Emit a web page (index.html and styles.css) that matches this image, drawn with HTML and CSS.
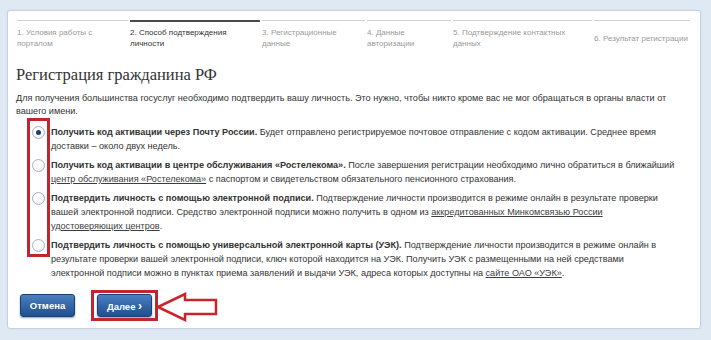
FILE: index.html
```html
<!DOCTYPE html>
<html lang="ru">

<head>
    <meta charset="UTF-8">
    <title>Регистрация гражданина РФ</title>
    <link rel="stylesheet" href="styles.css">
</head>

<body>
    <div class="panel">
        <div class="steps">
            <div class="step s1">1. Условия работы с<br>порталом</div>
            <div class="step s2 active">2. Способ подтверждения<br>личности</div>
            <div class="step s3">3. Регистрационные<br>данные</div>
            <div class="step s4">4. Данные<br>авторизации</div>
            <div class="step s5">5. Подтверждение контактных<br>данных</div>
            <div class="step s6">6. Результат регистрации</div>
        </div>

        <h2>Регистрация гражданина РФ</h2>
        <p class="intro">Для получения большинства госуслуг необходимо подтвердить вашу личность. Это нужно, чтобы никто кроме вас не мог обращаться в органы власти от<br>вашего имени.</p>

        <div class="options">
            <div class="option">
                <span class="radio checked"></span>
                <p><b>Получить код активации через Почту России.</b> Будет отправлено регистрируемое почтовое отправление с кодом активации. Среднее время<br>доставки – около двух недель.</p>
            </div>
            <div class="option">
                <span class="radio"></span>
                <p><b>Получить код активации в центре обслуживания «Ростелекома».</b> После завершения регистрации необходимо лично обратиться в ближайший<br><a href="#">центр обслуживания «Ростелекома»</a> с паспортом и свидетельством обязательного пенсионного страхования.</p>
            </div>
            <div class="option">
                <span class="radio"></span>
                <p><b>Подтвердить личность с помощью электронной подписи.</b> Подтверждение личности производится в режиме онлайн в результате проверки<br>вашей электронной подписи. Средство электронной подписи можно получить в одном из <a href="#">аккредитованных Минкомсвязью России</a><br><a href="#">удостоверяющих центров</a>.</p>
            </div>
            <div class="option">
                <span class="radio"></span>
                <p><b>Подтвердить личность с помощью универсальной электронной карты (УЭК).</b> Подтверждение личности производится в режиме онлайн в<br>результате проверки вашей электронной подписи, ключ которой находится на УЭК. Получить УЭК с размещенными на ней средствами<br>электронной подписи можно в пунктах приема заявлений и выдачи УЭК, адреса которых доступны на <a href="#">сайте ОАО «УЭК»</a>.</p>
            </div>
            <div class="mark radios-mark"></div>
        </div>

        <div class="actions">
            <button class="btn">Отмена</button>
            <div class="next-wrap">
                <button class="btn">Далее <span class="chev">›</span></button>
                <div class="mark next-mark"></div>
                <svg class="arrow" width="62" height="30" viewBox="0 0 62 30">
                    <polygon points="2,15 29,2 29,8 60,8 60,22 29,22 29,28" fill="#fff" stroke="#c9252c" stroke-width="2.5" stroke-linejoin="miter"/>
                </svg>
            </div>
        </div>
    </div>
</body>
</html>
```

FILE: styles.css
```css
body {
    margin: 0;
    padding: 10px 10px 9px 7px;
    background-color: #dfe9f3;
    font-family: "Liberation Sans", Arial, sans-serif;
    color: #333;
}

.panel {
    height: 319px;
    box-sizing: border-box;
    background-color: #fff;
    border: 1px solid #c6d3de;
    border-radius: 3px;
    box-shadow: 0 0 2px #cbd9e6;
    padding: 9px 10px 0 8px;
}

.steps {
    display: flex;
    gap: 2px;
    margin-left: 1px;
}

.step {
    height: 30px;
    border-top: 1px solid #cfcfcf;
    padding-top: 6px;
    font-size: 8px;
    line-height: 11px;
    color: #9a9a9a;
}

.step.active {
    border-top: 2px solid #4a4a4a;
    padding-top: 5px;
    color: #333;
}

.s1 { width: 111px; }
.s2 { width: 130px; }
.s3 { width: 103px; }
.s4 { width: 84px; }
.s5 { width: 139px; }
.s6 {
    width: 96px;
    padding-top: 12px;
    height: 24px;
}

h2 {
    margin: 0;
    padding-top: 8px;
    font-family: "Liberation Serif", Georgia, serif;
    font-weight: normal;
    font-size: 16.5px;
    line-height: 20px;
    color: #333;
}

.intro {
    margin: 7px 0 0;
    font-size: 9.1px;
    line-height: 13px;
    white-space: nowrap;
}

.options {
    position: relative;
    margin-top: 7px;
}

.option {
    display: flex;
    align-items: flex-start;
    margin-bottom: 5px;
}

.option p {
    margin: 0;
    font-size: 9.1px;
    line-height: 14px;
    white-space: nowrap;
}

.option a {
    color: #3d3d3d;
}

.radio {
    flex: none;
    width: 11px;
    height: 11px;
    margin: 1px 6px 0 16px;
    border: 1px solid #a9b3bd;
    border-radius: 50%;
    background: radial-gradient(circle at 40% 35%, #fff 30%, #e4e8ee 100%);
    display: flex;
    align-items: center;
    justify-content: center;
}

.radio.checked::after {
    content: "";
    width: 5px;
    height: 5px;
    border-radius: 50%;
    background-color: #1f3f6e;
}

.mark {
    position: absolute;
    border: 3px solid #bf262e;
}

.radios-mark {
    left: 11px;
    top: -7px;
    width: 17px;
    height: 133px;
}

.actions {
    display: flex;
    align-items: center;
    gap: 22px;
    margin: 14px 0 0 4px;
}

.btn {
    height: 23px;
    width: 55px;
    padding: 0;
    border: 1px solid #1b4276;
    border-radius: 3px;
    background: linear-gradient(#4a7fc0, #1f4f8f);
    box-shadow: 0 1px 2px #8aa0b8;
    color: #fff;
    font-family: "Liberation Sans", Arial, sans-serif;
    font-weight: bold;
    font-size: 9.5px;
    cursor: pointer;
}

.chev {
    font-size: 12px;
}

.next-wrap {
    position: relative;
}

.next-mark {
    left: -6px;
    top: -4px;
    width: 61px;
    height: 25px;
}

.arrow {
    position: absolute;
    left: 59px;
    top: -2px;
}
```
